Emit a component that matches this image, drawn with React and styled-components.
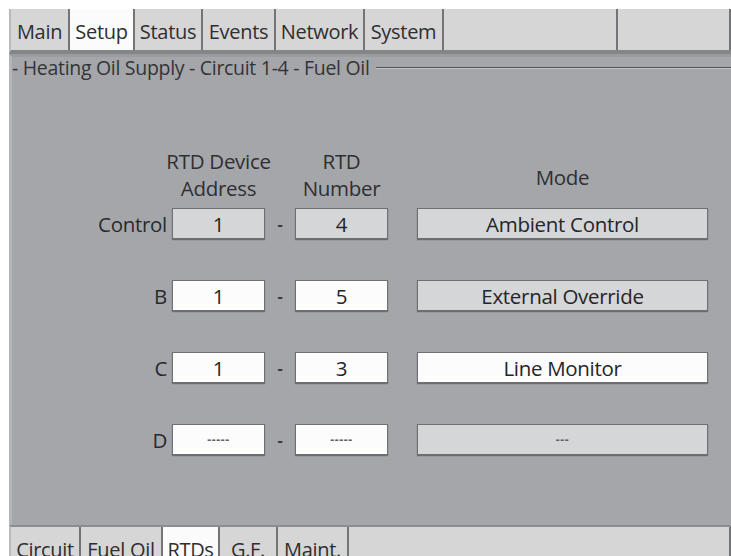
import React from "react";
import styled, { createGlobalStyle } from "styled-components";

const GlobalStyle = createGlobalStyle`
    html, body {
        margin: 0;
        padding: 0;
        background: #ffffff;
        overflow: hidden;
    }
    body {
        font-family: "Open Sans", "DejaVu Sans", sans-serif;
        color: #2b2b2d;
    }
`;

const columns = "154px 93px 30px 93px 29px 291px";

const topTabs = [
    { label: "Main", width: 59 },
    { label: "Setup", width: 65, active: true },
    { label: "Status", width: 68 },
    { label: "Events", width: 73 },
    { label: "Network", width: 89 },
    { label: "System", width: 79 },
    { label: "", width: 174 },
    { label: "", grow: true }
];

const bottomTabs = [
    { label: "Circuit", width: 70 },
    { label: "Fuel Oil", width: 82 },
    { label: "RTDs", width: 57, active: true },
    { label: "G.F.", width: 58 },
    { label: "Maint.", width: 71 },
    { label: "", grow: true }
];

const rows = [
    { name: "Control", address: "1", number: "4", mode: "Ambient Control", boxTone: "grey", modeTone: "grey" },
    { name: "B", address: "1", number: "5", mode: "External Override", boxTone: "white", modeTone: "grey" },
    { name: "C", address: "1", number: "3", mode: "Line Monitor", boxTone: "white", modeTone: "white" },
    { name: "D", address: "-----", number: "-----", mode: "---", boxTone: "white", modeTone: "grey", blank: true }
];

const Viewport = styled.div`
    width: 731px;
    height: 556px;
    overflow: hidden;
`;

const Screen = styled.div`
    height: 568px;
    box-sizing: border-box;
    padding: 9px 0 0 9px;
    display: flex;
    flex-direction: column;
`;

const TabBar = styled.div`
    display: flex;
    flex: 0 0 41px;
    background: #d5d5d6;
    border-bottom: ${props => (props.bottom ? "none" : "4px solid #848588")};
    border-top: ${props => (props.bottom ? "2px solid #8c8d90" : "none")};
    border-left: 2px solid #b9babd;
`;

const Tab = styled.div`
    flex: ${props => (props.grow ? "1 1 auto" : `0 0 ${props.width}px`)};
    box-sizing: border-box;
    display: flex;
    align-items: center;
    justify-content: center;
    padding-top: 3px;
    background: ${props => (props.active ? "#fbfbfb" : "#d6d6d7")};
    border-right: 2px solid #737477;
    font-size: 20px;
    letter-spacing: -0.3px;
    color: #2e2e30;
    white-space: nowrap;
    overflow: hidden;
`;

const Panel = styled.div`
    flex: 1 1 auto;
    background: #a5a6aa;
    border-left: 3px solid #b4b5b8;
    border-top: 3px solid #9b9c9f;
    display: flex;
    flex-direction: column;
`;

const GroupTitle = styled.div`
    display: flex;
    align-items: center;
    gap: 6px;
    line-height: 22px;
    font-size: 19.5px;
    letter-spacing: -0.3px;
    color: #343437;
    white-space: nowrap;

    &::after {
        content: "";
        flex: 1;
        height: 1px;
        background: #505154;
        border-bottom: 1px solid #c2c3c6;
    }
`;

const HeaderGrid = styled.div`
    display: grid;
    grid-template-columns: ${columns};
    height: 54px;
    margin: 69px 0 6px 6px;
    font-size: 20.5px;
    letter-spacing: -0.3px;
`;

const HeadCell = styled.div`
    grid-column: ${props => props.col};
    justify-self: center;
    text-align: center;
    white-space: nowrap;
    line-height: 27px;
    align-self: end;
    margin-bottom: ${props => (props.middle ? "11px" : "0")};
    color: #2f2f31;
`;

const FormGrid = styled.div`
    display: grid;
    grid-template-columns: ${columns};
    grid-auto-rows: 31px;
    row-gap: 41px;
    align-items: center;
    margin-left: 6px;
    font-size: 20.5px;
    letter-spacing: -0.3px;
`;

const RowLabel = styled.div`
    grid-column: 1;
    text-align: right;
    padding-right: 5px;
    color: #2a2a2c;
`;

const ValueBox = styled.div`
    height: 31px;
    box-sizing: border-box;
    display: flex;
    align-items: center;
    justify-content: center;
    background: ${props => (props.tone === "white" ? "#fcfcfc" : "#d5d6d8")};
    border: 1px solid #6f7073;
    box-shadow: 0 1px 1px rgba(60, 60, 64, 0.55);
    font-size: ${props => (props.blank ? "12px" : "20.5px")};
    letter-spacing: ${props => (props.blank ? "0.6px" : "-0.3px")};
    font-weight: ${props => (props.blank ? 700 : 400)};
    color: ${props => (props.blank ? "#606165" : "#252527")};
    white-space: nowrap;
`;

const Dash = styled.div`
    text-align: center;
    color: #3a3a3c;
    font-size: 16px;
    font-weight: 700;
`;

const ModeBox = styled(ValueBox)`
    grid-column: 6;
`;

export default function App() {
    return (
        <Viewport>
            <GlobalStyle />
            <Screen>
                <TabBar>
                    {topTabs.map((t, i) => (
                        <Tab key={i} width={t.width} grow={t.grow} active={t.active}>
                            {t.label}
                        </Tab>
                    ))}
                </TabBar>
                <Panel>
                    <GroupTitle>- Heating Oil Supply - Circuit 1-4 - Fuel Oil</GroupTitle>
                    <HeaderGrid>
                        <HeadCell col={2}>
                            RTD Device
                            <br />
                            Address
                        </HeadCell>
                        <HeadCell col={4}>
                            RTD
                            <br />
                            Number
                        </HeadCell>
                        <HeadCell col={6} middle>
                            Mode
                        </HeadCell>
                    </HeaderGrid>
                    <FormGrid>
                        {rows.map(r => (
                            <React.Fragment key={r.name}>
                                <RowLabel>{r.name}</RowLabel>
                                <ValueBox tone={r.boxTone} blank={r.blank}>
                                    {r.address}
                                </ValueBox>
                                <Dash>-</Dash>
                                <ValueBox tone={r.boxTone} blank={r.blank}>
                                    {r.number}
                                </ValueBox>
                                <ModeBox tone={r.modeTone} blank={r.blank}>
                                    {r.mode}
                                </ModeBox>
                            </React.Fragment>
                        ))}
                    </FormGrid>
                </Panel>
                <TabBar bottom>
                    {bottomTabs.map((t, i) => (
                        <Tab key={i} width={t.width} grow={t.grow} active={t.active}>
                            {t.label}
                        </Tab>
                    ))}
                </TabBar>
            </Screen>
        </Viewport>
    );
}
